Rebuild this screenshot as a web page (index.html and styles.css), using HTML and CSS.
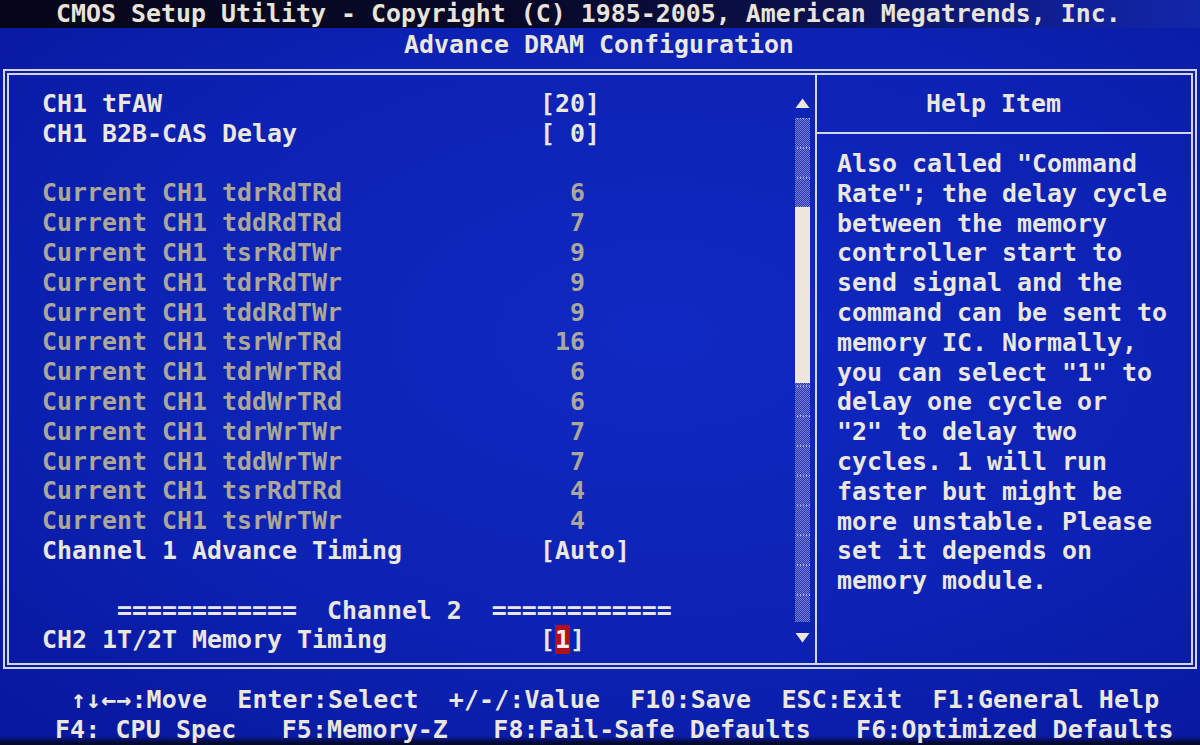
FILE: index.html
```html
<!DOCTYPE html>
<html lang="en">
<head>
<meta charset="utf-8">
<title>CMOS Setup Utility - Advance DRAM Configuration</title>
<link rel="stylesheet" href="styles.css">
</head>
<body>
<div class="screen">
  <header class="titlebar"><span class="txt">CMOS Setup Utility - Copyright (C) 1985-2005, American Megatrends, Inc.</span></header>
  <div class="subtitle"><span class="txt">Advance DRAM Configuration</span></div>
  <main class="frame">
    <section class="menu">
      <div class="list">
        <span class="lbl">CH1 tFAW</span><span class="val">[20]</span>
        <span class="lbl">CH1 B2B-CAS Delay</span><span class="val">[ 0]</span>
        <span class="blank"></span>
        <span class="lbl dim">Current CH1 tdrRdTRd</span><span class="val dim">  6</span>
        <span class="lbl dim">Current CH1 tddRdTRd</span><span class="val dim">  7</span>
        <span class="lbl dim">Current CH1 tsrRdTWr</span><span class="val dim">  9</span>
        <span class="lbl dim">Current CH1 tdrRdTWr</span><span class="val dim">  9</span>
        <span class="lbl dim">Current CH1 tddRdTWr</span><span class="val dim">  9</span>
        <span class="lbl dim">Current CH1 tsrWrTRd</span><span class="val dim"> 16</span>
        <span class="lbl dim">Current CH1 tdrWrTRd</span><span class="val dim">  6</span>
        <span class="lbl dim">Current CH1 tddWrTRd</span><span class="val dim">  6</span>
        <span class="lbl dim">Current CH1 tdrWrTWr</span><span class="val dim">  7</span>
        <span class="lbl dim">Current CH1 tddWrTWr</span><span class="val dim">  7</span>
        <span class="lbl dim">Current CH1 tsrRdTRd</span><span class="val dim">  4</span>
        <span class="lbl dim">Current CH1 tsrWrTWr</span><span class="val dim">  4</span>
        <span class="lbl">Channel 1 Advance Timing</span><span class="val">[Auto]</span>
        <span class="blank"></span>
        <span class="sep">     ============  Channel 2  ============</span>
        <span class="lbl">CH2 1T/2T Memory Timing</span><span class="val">[<span class="cur">1</span>]</span>
      </div>
      <div class="scroll">
        <div class="arrow up"><svg width="15" height="28" viewBox="0 0 15 28"><polygon points="0.5,19 14.5,19 7.5,9.5" fill="#ece6dc"/></svg></div>
        <div class="track"><div class="thumb"></div></div>
        <div class="arrow down"><svg width="15" height="29" viewBox="0 0 15 29"><polygon points="0.5,11 14.5,11 7.5,20.5" fill="#ece6dc"/></svg></div>
      </div>
    </section>
    <aside class="help">
      <div class="help-head"><span class="txt">Help Item</span></div>
      <div class="help-body">
        <div class="hl">Also called "Command</div>
        <div class="hl">Rate"; the delay cycle</div>
        <div class="hl">between the memory</div>
        <div class="hl">controller start to</div>
        <div class="hl">send signal and the</div>
        <div class="hl">command can be sent to</div>
        <div class="hl">memory IC. Normally,</div>
        <div class="hl">you can select "1" to</div>
        <div class="hl">delay one cycle or</div>
        <div class="hl">"2" to delay two</div>
        <div class="hl">cycles. 1 will run</div>
        <div class="hl">faster but might be</div>
        <div class="hl">more unstable. Please</div>
        <div class="hl">set it depends on</div>
        <div class="hl">memory module.</div>
      </div>
    </aside>
  </main>
  <footer class="keys">
    <div class="k1">↑↓←→:Move  Enter:Select  +/-/:Value  F10:Save  ESC:Exit  F1:General Help</div>
    <div class="k2">F4: CPU Spec   F5:Memory-Z   F8:Fail-Safe Defaults   F6:Optimized Defaults</div>
  </footer>
</div>
</body>
</html>
```

FILE: styles.css
```css
* {
  box-sizing: border-box;
  margin: 0;
  padding: 0;
}

html, body {
  width: 1200px;
  height: 745px;
  overflow: hidden;
}

body {
  background:
    linear-gradient(to bottom, rgba(4, 8, 40, 0) 736px, rgba(4, 8, 40, 0.95) 743px),
    radial-gradient(ellipse 75% 70% at 55% 45%, #1029c2 0%, #0c22b3 60%, #0819a0 100%);
  font-family: "DejaVu Sans Mono", "Liberation Mono", monospace;
  font-weight: bold;
  font-size: 24.92px;
  line-height: 29.8px;
  color: #ece7dc;
}

.txt, .lbl, .val, .sep, .hl, .k1, .k2 {
  white-space: pre;
}

.screen {
  width: 1200px;
  height: 745px;
  display: flex;
  flex-direction: column;
}

.titlebar {
  height: 28px;
  line-height: 28px;
  padding-left: 56px;
  background: linear-gradient(to right, #06061a 0%, #08092a 45%, #0b1150 70%, #0f1f94 88%, #1226a8 100%);
  color: #e8e4da;
}

.subtitle {
  margin-top: 1.8px;
  height: 29.8px;
  padding-left: 404px;
}

.frame {
  margin: 9.4px 0 0 3px;
  width: 1194px;
  height: 600px;
  flex: none;
  border: 6px double #d5d5e2;
  display: flex;
}

.menu {
  width: 806px;
  display: flex;
}

.list {
  flex: 1;
  padding: 14px 0 0 33px;
  display: grid;
  grid-template-columns: 498px auto;
  grid-auto-rows: 29.8px;
  align-content: start;
}

.blank {
  grid-column: 1 / -1;
}

.sep {
  grid-column: 1 / -1;
}

.dim {
  color: #aca799;
}

.cur {
  background: #b2111b;
  color: #f6eeee;
}

.scroll {
  width: 15px;
  margin-right: 5px;
  padding-top: 14.4px;
  display: flex;
  flex-direction: column;
}

.arrow.up {
  height: 28.6px;
}

.arrow.down {
  height: 29.8px;
}

.arrow svg {
  display: block;
}

.track {
  height: 504px;
  flex: none;
  background:
    radial-gradient(circle, rgba(210, 210, 235, 0.75) 0.7px, transparent 1px) 1px 15px / 3px 29.8px,
    repeating-conic-gradient(#7b80cc 0 25%, #2335b6 0 50%) 0 0 / 2px 2px;
}

.thumb {
  margin-top: 89px;
  height: 176px;
  background: #ece6dc;
}

.help {
  flex: 1;
  border-left: 2px solid #d5d5e2;
  display: flex;
  flex-direction: column;
}

.help-head {
  height: 59px;
  flex: none;
  padding: 14px 0 0 109px;
  border-bottom: 2px solid #d5d5e2;
}

.help-body {
  padding: 15px 0 0 20px;
}

.hl {
  height: 29.8px;
}

.keys {
  margin-top: 16.4px;
  letter-spacing: 0.12px;
}

.k1 {
  height: 29.8px;
  padding-left: 71px;
}

.k2 {
  height: 29.8px;
  padding-left: 55px;
}
```
